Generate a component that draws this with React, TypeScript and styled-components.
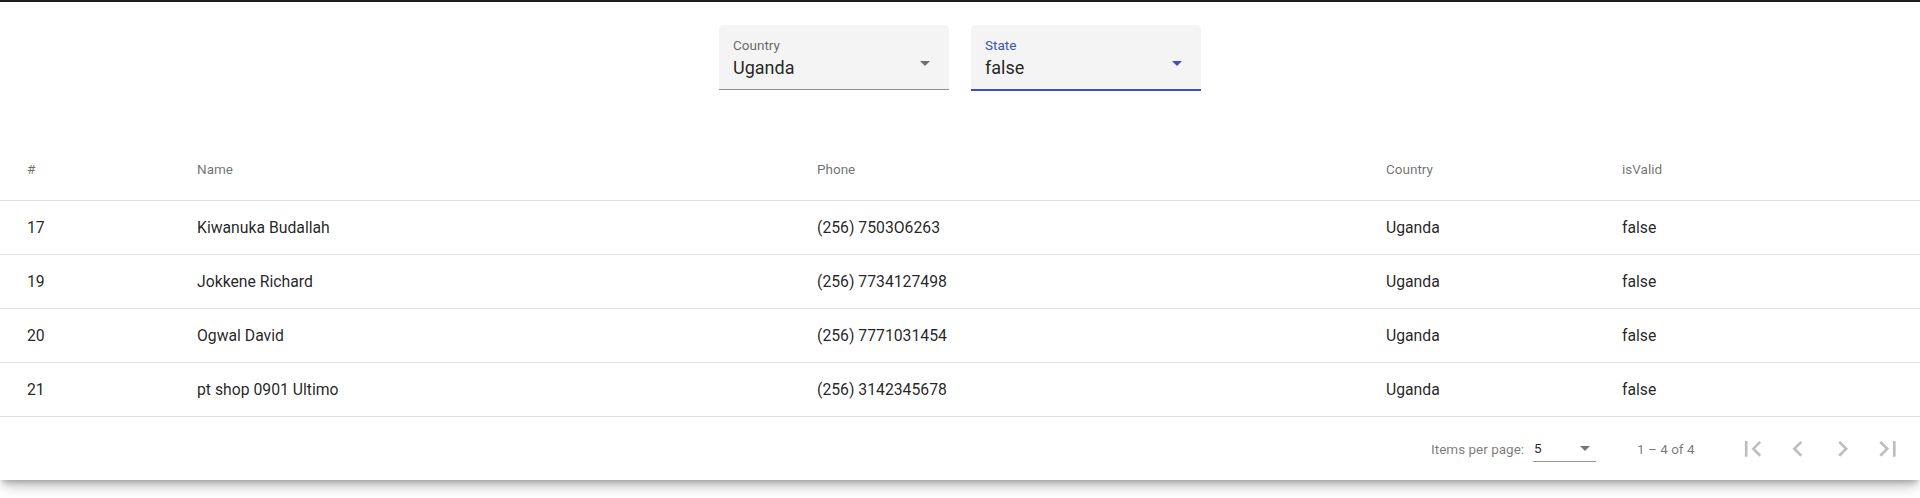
import styled, { createGlobalStyle } from "styled-components";

const GlobalStyle = createGlobalStyle`
  html, body {
    margin: 0;
    padding: 0;
    background: #ffffff;
    font-family: Roboto, "Noto Sans", "Liberation Sans", sans-serif;
  }
  * {
    box-sizing: border-box;
  }
`;

type Contact = {
  id: number;
  name: string;
  phone: string;
  country: string;
  valid: boolean;
};

const rows: Contact[] = [
  { id: 17, name: "Kiwanuka Budallah", phone: "(256) 7503O6263", country: "Uganda", valid: false },
  { id: 19, name: "Jokkene Richard", phone: "(256) 7734127498", country: "Uganda", valid: false },
  { id: 20, name: "Ogwal David", phone: "(256) 7771031454", country: "Uganda", valid: false },
  { id: 21, name: "pt shop 0901 Ultimo", phone: "(256) 3142345678", country: "Uganda", valid: false },
];

const columns = ["#", "Name", "Phone", "Country", "isValid"];

const FirstPage = () => (
  <svg viewBox="0 0 24 24" width="31.5" height="31.5" fill="currentColor">
    <path d="M18.41 16.59L13.82 12l4.59-4.59L17 6l-6 6 6 6zM6 6h2v12H6z" />
  </svg>
);
const PrevPage = () => (
  <svg viewBox="0 0 24 24" width="31.5" height="31.5" fill="currentColor">
    <path d="M15.41 7.41L14 6l-6 6 6 6 1.41-1.41L10.83 12z" />
  </svg>
);
const NextPage = () => (
  <svg viewBox="0 0 24 24" width="31.5" height="31.5" fill="currentColor">
    <path d="M10 6L8.59 7.41 13.17 12l-4.58 4.59L10 18l6-6z" />
  </svg>
);
const LastPage = () => (
  <svg viewBox="0 0 24 24" width="31.5" height="31.5" fill="currentColor">
    <path d="M5.59 7.41L10.18 12l-4.59 4.59L7 18l6-6-6-6zM16 6h2v12h-2z" />
  </svg>
);

const SelectField = ({
  label,
  value,
  focused,
}: {
  label: string;
  value: string;
  focused?: boolean;
}) => (
  <Field $focused={focused}>
    <FieldText>
      <FieldLabel $focused={focused}>{label}</FieldLabel>
      <FieldValue>{value}</FieldValue>
    </FieldText>
    <Arrow $color={focused ? "#3f51b5" : "rgba(0,0,0,0.54)"} />
  </Field>
);

export default function App() {
  return (
    <Page>
      <GlobalStyle />
      <TopBar />
      <Filters>
        <SelectField label="Country" value="Uganda" />
        <SelectField label="State" value="false" focused />
      </Filters>
      <Card>
        <HeaderRow>
          {columns.map((c, i) => (
            <HeaderCell key={c} $first={i === 0}>
              {c}
            </HeaderCell>
          ))}
        </HeaderRow>
        {rows.map((r) => (
          <Row key={r.id}>
            <Cell $first>{r.id}</Cell>
            <Cell>{r.name}</Cell>
            <Cell>{r.phone}</Cell>
            <Cell>{r.country}</Cell>
            <Cell>{String(r.valid)}</Cell>
          </Row>
        ))}
        <Paginator>
          <PageLabel>Items per page:</PageLabel>
          <PageSize>
            <span>5</span>
            <Arrow $color="rgba(0,0,0,0.54)" />
          </PageSize>
          <RangeLabel>1 – 4 of 4</RangeLabel>
          <NavButton>
            <FirstPage />
          </NavButton>
          <NavButton>
            <PrevPage />
          </NavButton>
          <NavButton>
            <NextPage />
          </NavButton>
          <NavButton>
            <LastPage />
          </NavButton>
        </Paginator>
      </Card>
    </Page>
  );
}

const Page = styled.div`
  width: 1920px;
  min-height: 498px;
  background: #ffffff;
`;

const TopBar = styled.div`
  height: 2px;
  background: #1e1e1e;
`;

const Filters = styled.div`
  display: flex;
  justify-content: center;
  align-items: flex-start;
  gap: 22px;
  padding-top: 23px;
  height: 135px;
`;

const Field = styled.div<{ $focused?: boolean }>`
  width: 230px;
  height: ${(p) => (p.$focused ? "66px" : "65px")};
  display: flex;
  align-items: flex-start;
  padding: 12px 19px 0 14px;
  background: #f4f4f4;
  border-radius: 4.5px 4.5px 0 0;
  border-bottom: ${(p) =>
    p.$focused ? "2px solid #3f51b5" : "1px solid rgba(0,0,0,0.42)"};
`;

const FieldText = styled.div`
  flex: 1;
  display: flex;
  flex-direction: column;
`;

const FieldLabel = styled.div<{ $focused?: boolean }>`
  font-size: 13.5px;
  line-height: 16px;
  color: ${(p) => (p.$focused ? "#3f51b5" : "rgba(0,0,0,0.6)")};
`;

const FieldValue = styled.div`
  margin-top: 4px;
  font-size: 18px;
  line-height: 22px;
  color: rgba(0, 0, 0, 0.87);
`;

const Arrow = styled.span<{ $color: string }>`
  align-self: center;
  width: 0;
  height: 0;
  border-left: 5.6px solid transparent;
  border-right: 5.6px solid transparent;
  border-top: 5.6px solid ${(p) => p.$color};
`;

const Card = styled.div`
  background: #ffffff;
  box-shadow: 0 5px 5px -3px rgba(0, 0, 0, 0.2),
    0 9px 10px -2px rgba(0, 0, 0, 0.14), 0 8px 14px -4px rgba(0, 0, 0, 0.12);
`;

const HeaderRow = styled.div`
  display: grid;
  grid-template-columns: 197px 620px 569px 236px 1fr;
  align-items: center;
  height: 64px;
  padding-top: 1px;
  border-bottom: 1px solid rgba(0, 0, 0, 0.12);
`;

const HeaderCell = styled.div<{ $first?: boolean }>`
  padding-left: ${(p) => (p.$first ? "27px" : "0")};
  font-size: 13.5px;
  font-weight: 400;
  color: rgba(0, 0, 0, 0.58);
`;

const Row = styled.div`
  display: grid;
  grid-template-columns: 197px 620px 569px 236px 1fr;
  align-items: center;
  height: 54px;
  border-bottom: 1px solid rgba(0, 0, 0, 0.12);
`;

const Cell = styled.div<{ $first?: boolean }>`
  padding-left: ${(p) => (p.$first ? "27px" : "0")};
  font-size: 15.75px;
  color: rgba(0, 0, 0, 0.87);
`;

const Paginator = styled.div`
  display: flex;
  justify-content: flex-end;
  align-items: center;
  height: 63px;
  padding: 0 9.5px 0 9px;
  font-size: 13.5px;
  color: rgba(0, 0, 0, 0.54);
`;

const PageLabel = styled.div`
  margin-right: 9px;
`;

const PageSize = styled.div`
  width: 63px;
  height: 25px;
  margin-top: 1px;
  display: flex;
  align-items: center;
  justify-content: space-between;
  padding: 0 6px 1px 1px;
  border-bottom: 1px solid rgba(0, 0, 0, 0.42);
  color: rgba(0, 0, 0, 0.87);
`;

const RangeLabel = styled.div`
  margin: 0 36px 0 41px;
`;

const NavButton = styled.div`
  width: 45px;
  height: 45px;
  display: flex;
  align-items: center;
  justify-content: center;
  color: rgba(0, 0, 0, 0.26);
`;
